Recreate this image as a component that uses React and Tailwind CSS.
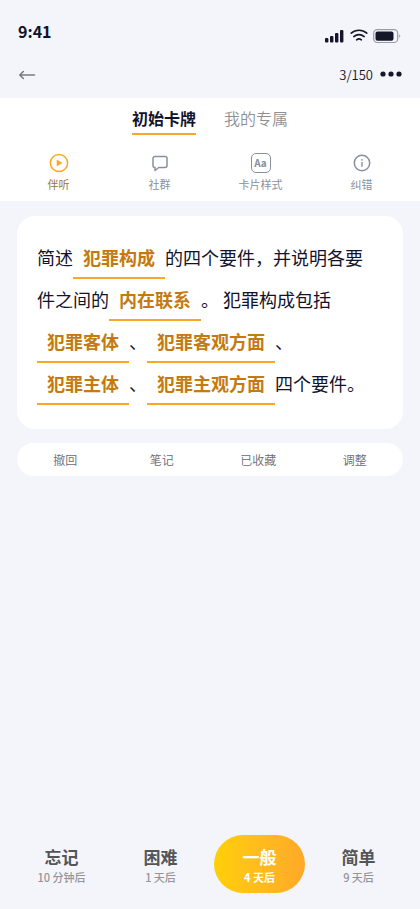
import { useState } from 'react'

const TABS = ['初始卡牌', '我的专属']
const ACTIONS = ['撤回', '笔记', '已收藏', '调整']

const RATINGS = [
  { label: '忘记', next: '10 分钟后' },
  { label: '困难', next: '1 天后' },
  { label: '一般', next: '4 天后' },
  { label: '简单', next: '9 天后' },
]

function PlayIcon() {
  return (
    <svg width="20" height="20" viewBox="0 0 20 20" fill="none">
      <circle cx="10" cy="10" r="8.600" stroke="#f9a825" strokeWidth="1.5" />
      <path d="M8 7v6l5-3z" fill="#f9a825" stroke="#f9a825" strokeWidth=".6" strokeLinejoin="round" />
    </svg>
  )
}

function ChatIcon() {
  return (
    <svg width="20" height="20" viewBox="0 0 20 20" fill="none" stroke="#8a8fa0" strokeWidth="1.5" strokeLinejoin="round">
      <path d="M5 3.500h10a2 2 0 0 1 2 2v7a2 2 0 0 1-2 2H8.800L5 17.500v-3a2 2 0 0 1-2-2v-7a2 2 0 0 1 2-2z" />
    </svg>
  )
}

function StyleIcon() {
  return (
    <span className="flex size-5 items-center justify-center rounded-[5px] border border-[#8a8fa0] text-[10px] leading-none font-bold">
      Aa
    </span>
  )
}

function InfoIcon() {
  return (
    <svg width="20" height="20" viewBox="0 0 20 20" fill="none" stroke="#8a8fa0">
      <circle cx="10" cy="10" r="7.700" strokeWidth="1.5" />
      <path d="M10 9v4.700" strokeWidth="1.4" />
      <circle cx="10" cy="6.800" r=".9" fill="#8a8fa0" stroke="none" />
    </svg>
  )
}

const TOOLS = [
  { label: '伴听', Icon: PlayIcon, color: 'text-[#9a7438]' },
  { label: '社群', Icon: ChatIcon, color: 'text-[#8a8fa0]' },
  { label: '卡片样式', Icon: StyleIcon, color: 'text-[#8a8fa0]' },
  { label: '纠错', Icon: InfoIcon, color: 'text-[#8a8fa0]' },
]

function StatusBar() {
  return (
    <div className="flex h-12 items-end justify-between pr-[19px] pl-[18px]">
      <span className="mb-[5px] text-base leading-6 font-semibold">9:41</span>
      <div className="mb-1 flex items-center gap-[5px]">
        <svg width="20" height="16" viewBox="0 0 20 16" fill="#15162a">
          <rect x="0" y="10" width="3.400" height="4.500" rx="1" />
          <rect x="5" y="8" width="3.400" height="6.500" rx="1" />
          <rect x="10" y="5" width="3.400" height="9.500" rx="1" />
          <rect x="15" y="2" width="3.400" height="12.500" rx="1" />
        </svg>
        <svg width="18" height="16" viewBox="0 0 18 16" fill="none" stroke="#15162a" strokeWidth="1.6" strokeLinecap="round">
          <path d="M1.200 5.200c4.400-4 11.200-4 15.600 0" />
          <path d="M3.800 8.600c3-2.600 7.400-2.600 10.400 0" />
          <path d="M6.600 11.800c1.500-1.200 3.300-1.200 4.800 0" />
        </svg>
        <svg width="28" height="16" viewBox="0 0 28 16" fill="none">
          <rect x=".7" y="1.700" width="24" height="12.800" rx="3.600" stroke="#9a9ba5" strokeWidth="1.200" />
          <rect x="2.500" y="3.500" width="18" height="9.200" rx="2" fill="#15162a" />
          <path d="M26.200 6.500v3.200c.7-.3 1.100-.9 1.100-1.600s-.4-1.300-1.100-1.600z" fill="#9a9ba5" />
        </svg>
      </div>
    </div>
  )
}

function Blank({ children }) {
  return (
    <span className="inline-block border-b-2 border-[#f9a825] px-[10px] leading-10 font-bold text-[#c47a10]">
      {children}
    </span>
  )
}

export default function App() {
  const [tab, setTab] = useState('初始卡牌')
  const [rating, setRating] = useState('一般')

  return (
    <div className="flex min-h-screen flex-col bg-[#f4f5fa] font-['Noto_Sans_CJK_SC',sans-serif] text-[#12132a]">
      <StatusBar />

      <header className="flex h-[50px] items-center justify-between px-[18px] pt-1">
        <button type="button" aria-label="返回">
          <svg width="18" height="16" viewBox="0 0 18 16" fill="none" stroke="#7a7a80" strokeWidth="1.600" strokeLinecap="round" strokeLinejoin="round">
            <path d="M16.500 8H2M5.300 4.500L1.800 8l3.500 3.500" />
          </svg>
        </button>
        <div className="flex items-center gap-[7px]">
          <span className="text-[13px] leading-5 font-[350]">3/150</span>
          <button type="button" aria-label="更多">
            <svg width="22" height="16" viewBox="0 0 22 16" fill="#15162a">
              <circle cx="3" cy="7" r="2.600" />
              <circle cx="11" cy="7" r="2.600" />
              <circle cx="19" cy="7" r="2.600" />
            </svg>
          </button>
        </div>
      </header>

      <section className="bg-white pt-2 pb-[9px]">
        <nav className="flex justify-center gap-7">
          {TABS.map(name => (
            <button
              key={name}
              type="button"
              onClick={() => setTab(name)}
              className={
                name === tab
                  ? 'border-b-2 border-[#f9a825] pb-[3px] text-base leading-6 font-bold'
                  : 'border-b-2 border-transparent pb-[3px] text-base leading-6 font-[350] text-[#909094]'
              }
            >
              {name}
            </button>
          ))}
        </nav>

        <div className="mt-[18px] grid grid-cols-4 px-2">
          {TOOLS.map(({ label, Icon, color }) => (
            <button key={label} type="button" className={`flex flex-col items-center gap-[3px] ${color}`}>
              <Icon />
              <span className="text-[11px] leading-4">{label}</span>
            </button>
          ))}
        </div>
      </section>

      <main className="px-[17px] pt-[15px]">
        <article className="rounded-[18px] bg-white pt-[21px] pr-6 pb-6 pl-5 text-lg leading-10">
          简述<Blank>犯罪构成</Blank>的四个要件，并说明各要件之间的<Blank>内在联系</Blank>。 犯罪构成包括
          <Blank>犯罪客体</Blank>、<Blank>犯罪客观方面</Blank>、<Blank>犯罪主体</Blank>、<Blank>犯罪主观方面</Blank>四个要件。
        </article>

        <div className="mt-[14px] grid grid-cols-4 rounded-[17px] bg-white">
          {ACTIONS.map(name => (
            <button key={name} type="button" className="py-2 text-xs leading-[17px] font-[350] text-[#6b6b70]">
              {name}
            </button>
          ))}
        </div>
      </main>

      <footer className="mt-auto grid grid-cols-4 px-3 pb-4">
        {RATINGS.map(({ label, next }) => (
          <button
            key={label}
            type="button"
            onClick={() => setRating(label)}
            className={
              label === rating
                ? 'mx-1 rounded-full bg-linear-to-r from-[#ffcf05] to-[#ffa928] pt-[10px] pb-2 text-white'
                : 'mx-1 rounded-full pt-[10px] pb-2 text-[#555558]'
            }
          >
            <span className="block text-[17px] leading-6 font-bold">{label}</span>
            <span
              className={
                label === rating
                  ? 'block text-[11px] leading-4 font-bold'
                  : 'block text-[11px] leading-4 font-medium text-[#949499]'
              }
            >
              {next}
            </span>
          </button>
        ))}
      </footer>
    </div>
  )
}
